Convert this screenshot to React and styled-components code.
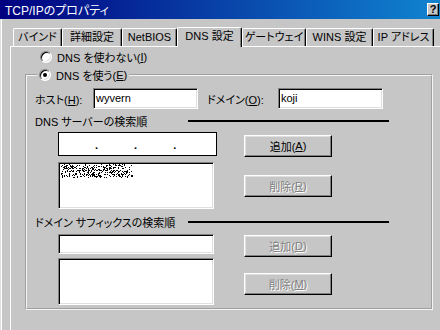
import styled, { createGlobalStyle } from 'styled-components';

const GlobalStyle = createGlobalStyle`
  html, body {
    margin: 0;
    padding: 0;
    background: #c6c6c6;
    overflow: hidden;
  }
  body {
    font-family: "Liberation Sans", "Noto Sans CJK JP", sans-serif;
    font-size: 11px;
    font-feature-settings: "palt";
    color: #000;
  }
`;

const Window = styled.div`
  width: 440px;
  height: 330px;
  background: #c6c6c6;
  display: flex;
  flex-direction: column;
  overflow: hidden;
`;

const TitleBar = styled.div`
  height: 19px;
  flex: none;
  display: flex;
  align-items: center;
  justify-content: space-between;
  padding: 0 1px 0 5px;
  background: linear-gradient(to right, #000080, #1084d0);
  color: #fff;
  font-size: 12px;
  white-space: nowrap;
`;

const HelpButton = styled.div`
  width: 12px;
  height: 13px;
  box-sizing: border-box;
  background: #c6c6c6;
  border: 1px solid;
  border-color: #fff #000 #000 #fff;
  box-shadow: inset -1px -1px #808080;
  color: #000;
  font-weight: bold;
  font-size: 11px;
  line-height: 11px;
  text-align: center;
`;

const Frame = styled.div`
  flex: 1;
  display: flex;
  flex-direction: column;
  padding-top: 8px;
  border-left: 1px solid #dfdfdf;
  box-shadow: inset 1px 0 #fff;
`;

const TabRow = styled.div`
  display: flex;
  align-items: flex-end;
  padding-left: 12px;
  height: 19px;
`;

const Tab = styled.div`
  width: ${p => p.$w}px;
  height: ${p => (p.$selected ? 20 : 18)}px;
  box-sizing: border-box;
  flex: none;
  border-top: 1px solid #fff;
  border-left: 1px solid #fff;
  border-right: 1px solid #000;
  box-shadow: inset -1px 0 #808080;
  border-radius: 2px 2px 0 0;
  background: #c6c6c6;
  text-align: center;
  line-height: 17px;
  white-space: nowrap;
  position: relative;
  z-index: ${p => (p.$selected ? 1 : 0)};
  margin-bottom: ${p => (p.$selected ? -1 : 0)}px;
`;

const Panel = styled.div`
  flex: 1;
  margin: 0 -20px 0 9px;
  border-top: 1px solid #fff;
  border-left: 1px solid #fff;
  padding-left: 14px;
`;

const RadioRow = styled.label`
  display: flex;
  align-items: center;
  height: 16px;
  margin: ${p => p.$top || 0}px 0 0 15px;
  white-space: nowrap;
`;

const Radio = styled.span`
  width: 12px;
  height: 12px;
  box-sizing: border-box;
  flex: none;
  border-radius: 50%;
  background: #fff;
  border: 1px solid;
  border-color: #808080 #fff #fff #808080;
  box-shadow: inset 1px 1px #000, inset -1px -1px #dfdfdf;
  margin-right: 5px;
  display: flex;
  align-items: center;
  justify-content: center;

  &::after {
    content: '';
    width: 4px;
    height: 4px;
    border-radius: 50%;
    background: ${p => (p.$checked ? '#000' : 'transparent')};
  }
`;

const Group = styled.fieldset`
  width: 408px;
  box-sizing: border-box;
  margin: 2px 0 0 0;
  padding: 5px 0 3px 8px;
  border: 2px groove #f4f4f4;
  min-width: 0;
`;

const Legend = styled.legend`
  padding: 0 2px;
  margin-left: 2px;
  height: 16px;
  display: flex;
  align-items: center;
  white-space: nowrap;

  ${RadioRow} {
    margin: 0;
  }
`;

const HostRow = styled.div`
  display: flex;
  align-items: center;
  height: 21px;
`;

const Label = styled.span`
  width: ${p => p.$w}px;
  margin-left: ${p => p.$left || 0}px;
  flex: none;
  white-space: nowrap;
`;

const Field = styled.div`
  width: ${p => p.$w}px;
  height: ${p => p.$h}px;
  box-sizing: border-box;
  flex: none;
  background: #fff;
  border: 1px solid;
  border-color: #808080 #fff #fff #808080;
  box-shadow: inset 1px 1px #000, inset -1px -1px #dfdfdf;
  padding: 1px 2px;
  line-height: 16px;
  margin-top: ${p => p.$top || 0}px;
  overflow: hidden;
`;

const IpField = styled.div`
  width: 159px;
  height: 24px;
  box-sizing: border-box;
  background: #fff;
  border: 1px solid #000;
  display: flex;
  align-items: flex-end;
  padding: 0 0 4px 36px;
  gap: 36px;
  font-weight: bold;
  line-height: 12px;
`;

const SectionHeader = styled.div`
  display: flex;
  align-items: center;
  height: 16px;
  margin-top: ${p => p.$top}px;
  padding-right: 42px;
  white-space: nowrap;
`;

const Rule = styled.div`
  width: 201px;
  height: 2px;
  background: #000;
  margin-left: auto;
`;

const Block = styled.div`
  display: grid;
  grid-template-columns: 159px 88px;
  column-gap: 27px;
  padding-left: 23px;
  margin-top: ${p => p.$top}px;
`;

const Column = styled.div`
  display: flex;
  flex-direction: column;
  align-items: flex-start;
`;

const Button = styled.div`
  width: 88px;
  height: 22px;
  box-sizing: border-box;
  margin-top: ${p => p.$top || 0}px;
  background: #c6c6c6;
  border: 1px solid;
  border-color: #fff #000 #000 #fff;
  box-shadow: inset -1px -1px #808080, inset 1px 1px #dfdfdf;
  display: flex;
  align-items: center;
  justify-content: center;
  color: ${p => (p.$disabled ? '#808080' : '#000')};
  text-shadow: ${p => (p.$disabled ? '1px 1px #fff' : 'none')};
  white-space: nowrap;
`;

// ぼかされたサーバー名（ディザ状のノイズ）
const noisePixels = (() => {
  let seed = 17;
  const rand = () => {
    seed = (seed * 1103515245 + 12345) % 2147483648;
    return seed / 2147483648;
  };
  const px = [];
  for (let y = 0; y < 14; y++) {
    for (let x = 0; x < 72; x++) {
      const edge = x > 64 ? 0.18 : 0.36;
      const band = y === 0 || y === 13 ? 0.12 : edge;
      if (rand() < band) px.push([x, y]);
    }
  }
  return px;
})();

const Noise = () => (
  <svg width="72" height="14" viewBox="0 0 72 14" shapeRendering="crispEdges" style={{ display: 'block' }}>
    {noisePixels.map(([x, y]) => (
      <rect key={`${x}-${y}`} x={x} y={y} width="1" height="1" fill="#000" />
    ))}
  </svg>
);

const tabs = [
  { label: 'バインド', w: 49 },
  { label: '詳細設定', w: 60 },
  { label: 'NetBIOS', w: 55 },
  { label: 'DNS 設定', w: 65, selected: true },
  { label: 'ゲートウェイ', w: 64 },
  { label: 'WINS 設定', w: 67 },
  { label: 'IP アドレス', w: 61 },
];

const App = () => (
  <Window>
    <GlobalStyle />
    <TitleBar>
      <span>TCP/IPのプロパティ</span>
      <HelpButton>?</HelpButton>
    </TitleBar>
    <Frame>
      <TabRow>
        {tabs.map(t => (
          <Tab key={t.label} $w={t.w} $selected={t.selected}>{t.label}</Tab>
        ))}
      </TabRow>
      <Panel>
        <RadioRow $top={2}>
          <Radio />
          DNS を使わない(<u>I</u>)
        </RadioRow>
        <Group>
          <Legend>
            <RadioRow>
              <Radio $checked />
              DNS を使う(<u>E</u>)
            </RadioRow>
          </Legend>
          <HostRow>
            <Label $w={58}>ホスト(<u>H</u>):</Label>
            <Field $w={105} $h={21}>wyvern</Field>
            <Label $w={71} $left={9}>ドメイン(<u>O</u>):</Label>
            <Field $w={105} $h={21}>koji</Field>
          </HostRow>

          <SectionHeader $top={4}>
            DNS サーバーの検索順
            <Rule />
          </SectionHeader>
          <Block $top={3}>
            <Column>
              <IpField>
                <span>.</span>
                <span>.</span>
                <span>.</span>
              </IpField>
              <Field $w={156} $h={47} $top={6}>
                <Noise />
              </Field>
            </Column>
            <Column>
              <Button $top={3}>追加(<u>A</u>)</Button>
              <Button $top={18} $disabled>削除(<u>R</u>)</Button>
            </Column>
          </Block>

          <SectionHeader $top={5}>
            ドメイン サフィックスの検索順
            <Rule />
          </SectionHeader>
          <Block $top={4}>
            <Column>
              <Field $w={156} $h={20} />
              <Field $w={156} $h={47} $top={4} />
            </Column>
            <Column>
              <Button $top={1} $disabled>追加(<u>D</u>)</Button>
              <Button $top={16} $disabled>削除(<u>M</u>)</Button>
            </Column>
          </Block>
        </Group>
      </Panel>
    </Frame>
  </Window>
);

export default App;
